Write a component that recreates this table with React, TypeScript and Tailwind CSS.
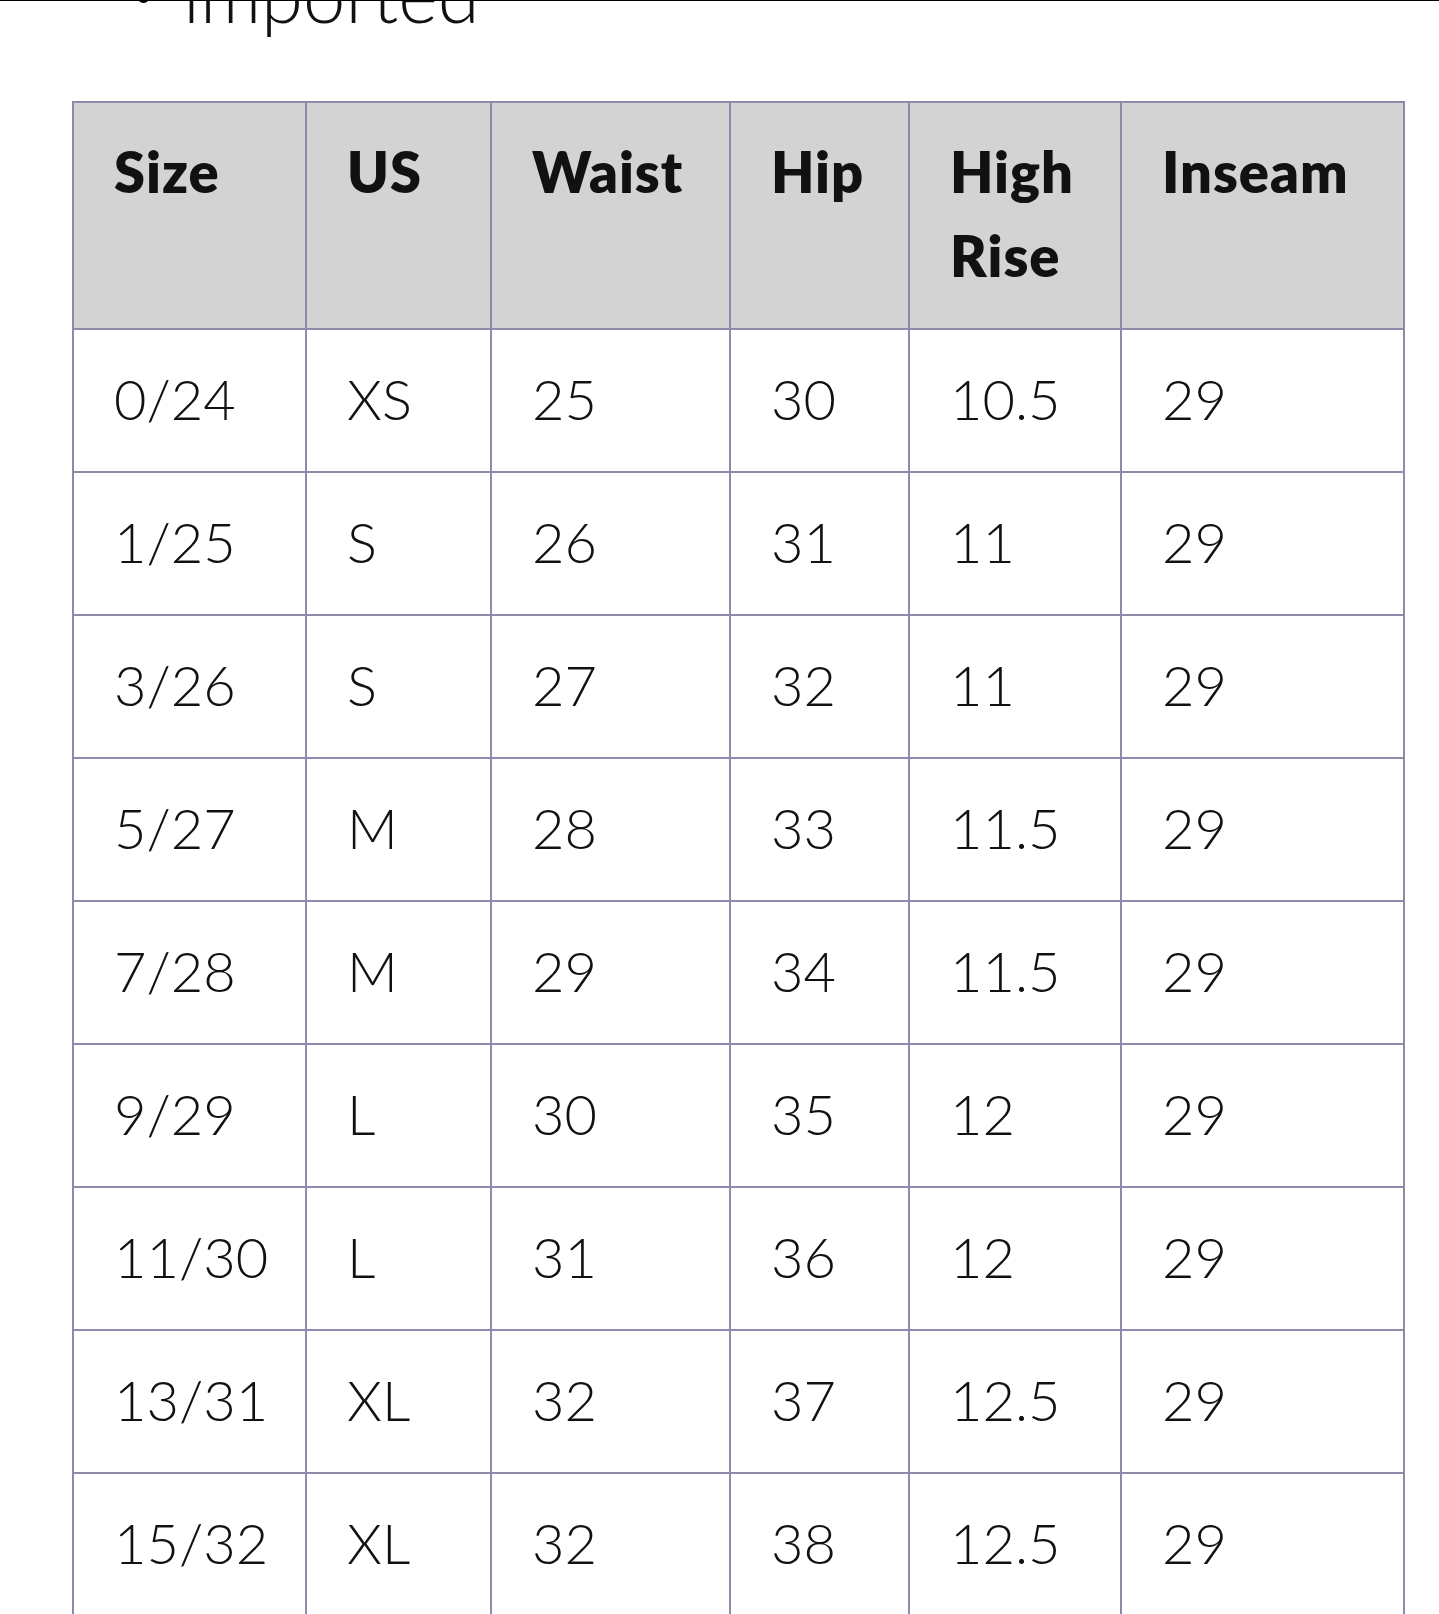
const headers = ["Size", "US", "Waist", "Hip", "High Rise", "Inseam"];

const rows = [
  ["0/24", "XS", "25", "30", "10.5", "29"],
  ["1/25", "S", "26", "31", "11", "29"],
  ["3/26", "S", "27", "32", "11", "29"],
  ["5/27", "M", "28", "33", "11.5", "29"],
  ["7/28", "M", "29", "34", "11.5", "29"],
  ["9/29", "L", "30", "35", "12", "29"],
  ["11/30", "L", "31", "36", "12", "29"],
  ["13/31", "XL", "32", "37", "12.5", "29"],
  ["15/32", "XL", "32", "38", "12.5", "29"],
];

const colWidths = ["w-[233px]", "w-[185px]", "w-[239px]", "w-[179px]", "w-[212px]", "w-[283px]"];

export default function App() {
  return (
    <div className="min-h-screen bg-white text-[#111] font-[Lato,sans-serif]">
      {/* tail end of the product details list above the chart */}
      <div className="h-px bg-black" />
      <div className="h-[100px] overflow-hidden flex items-start">
        <span className="ml-[137px] mt-[-11px] w-[13px] h-[13px] rounded-full bg-black shrink-0" />
        <span className="ml-[33px] mt-[-45px] text-[76px] font-light leading-none">imported</span>
      </div>

      <table className="ml-[72px] w-[1331px] table-fixed border-collapse">
        <colgroup>
          {colWidths.map((w) => (
            <col key={w} className={w} />
          ))}
        </colgroup>
        <thead>
          <tr className="bg-[#d3d3d3]">
            {headers.map((h) => (
              <th
                key={h}
                className="border-2 border-[#8e8aab] pl-10 pr-2 pt-[27px] pb-[30px] text-left align-top text-[56px] leading-[84px] font-extrabold tracking-[1px]"
              >
                {h}
              </th>
            ))}
          </tr>
        </thead>
        <tbody>
          {rows.map((r, i) => (
            <tr key={i}>
              {r.map((c, j) => (
                <td
                  key={j}
                  className="border-2 border-[#8e8aab] pl-10 pr-2 pt-[27px] pb-[30px] text-left text-[56px] leading-[84px] font-light"
                >
                  {c}
                </td>
              ))}
            </tr>
          ))}
        </tbody>
      </table>
    </div>
  );
}
